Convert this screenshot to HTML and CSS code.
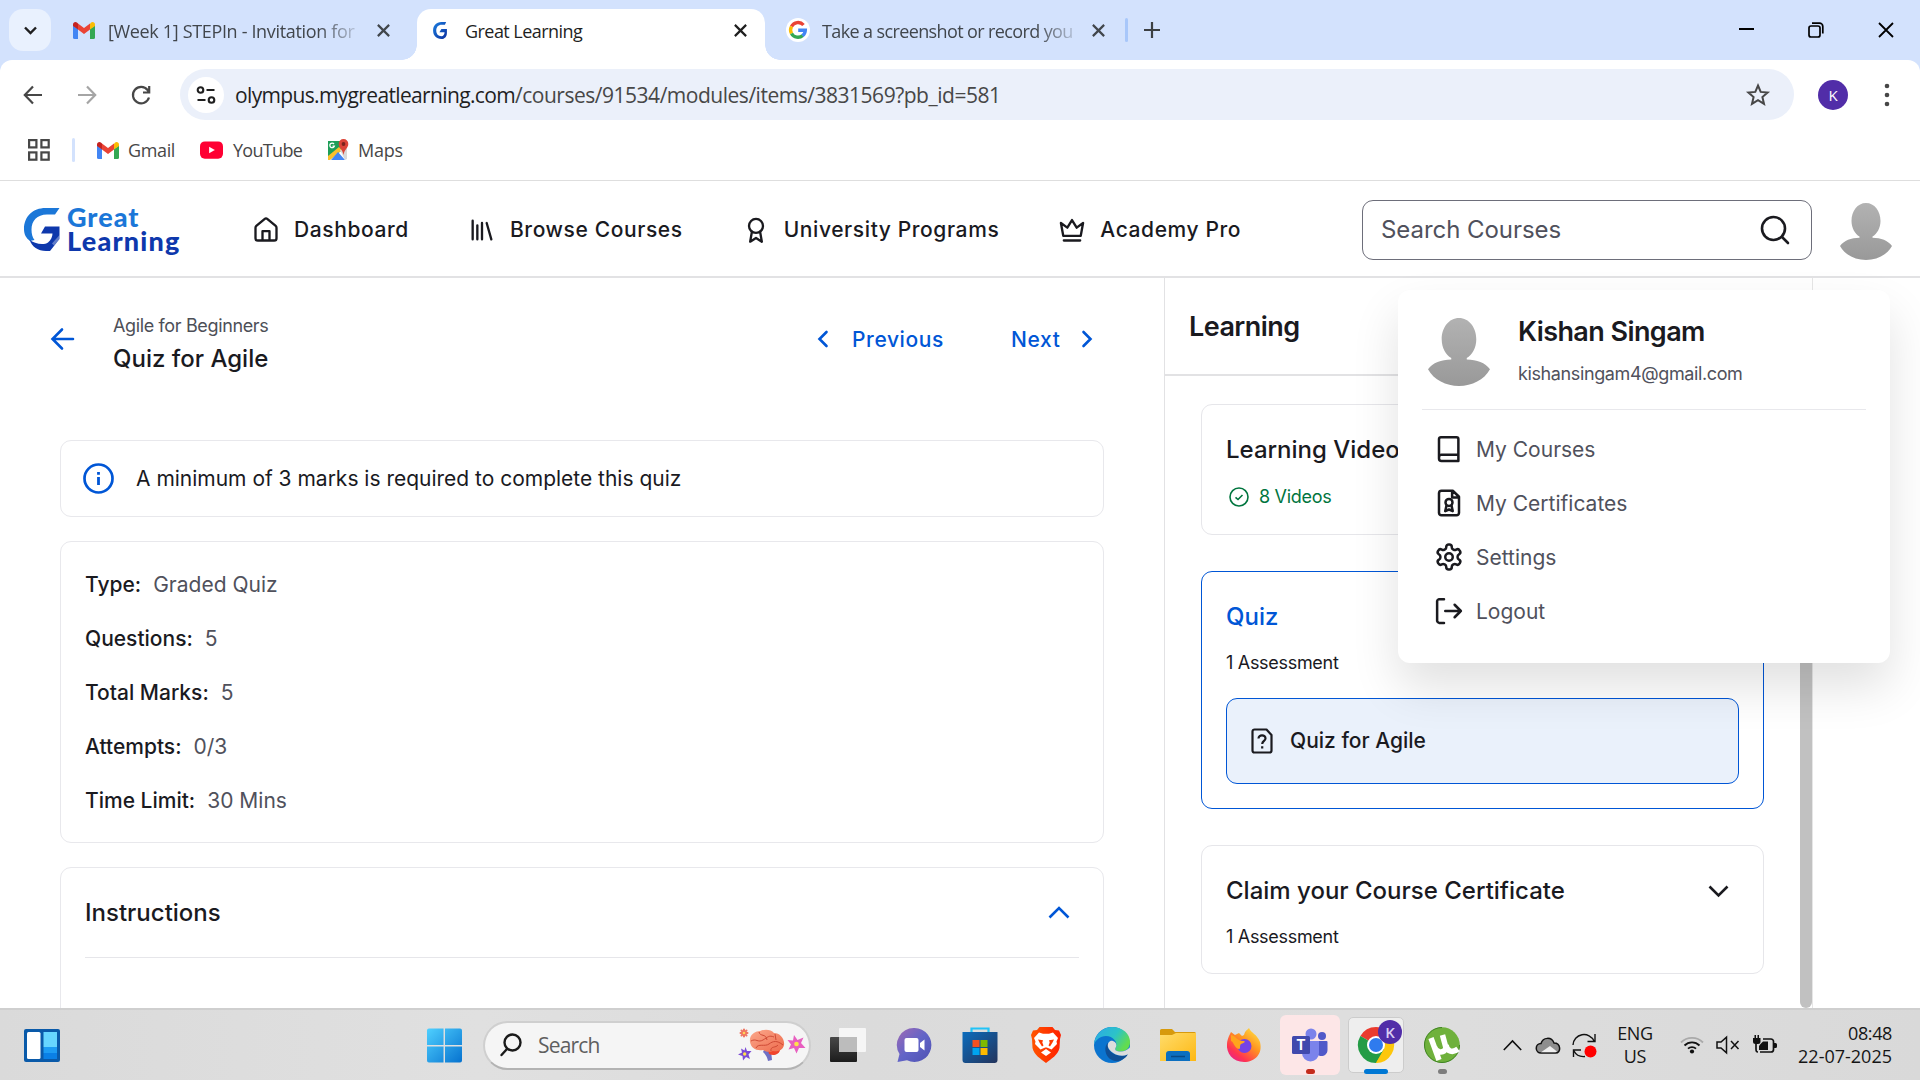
FILE: index.html
```html
<!DOCTYPE html>
<html lang="en">
<head>
<meta charset="utf-8">
<title>Great Learning</title>
<link rel="stylesheet" href="styles.css">
</head>
<body>
<svg class="defs" aria-hidden="true">
  <defs>
    <linearGradient id="gray" x1="0" y1="0" x2="0" y2="1"><stop offset="0" stop-color="#b2b2b2"/><stop offset="1" stop-color="#999"/></linearGradient>
    <linearGradient id="glBlue" x1="0" y1="0" x2="1" y2="1"><stop offset="0" stop-color="#1b7fe0"/><stop offset="1" stop-color="#0b2f9f"/></linearGradient>
    <linearGradient id="win" x1="0" y1="0" x2="1" y2="1"><stop offset="0" stop-color="#4fd0ff"/><stop offset="1" stop-color="#0672cf"/></linearGradient>
    <linearGradient id="chat" x1="0" y1="0" x2="1" y2="1"><stop offset="0" stop-color="#a06ab4"/><stop offset=".5" stop-color="#6264c7"/><stop offset="1" stop-color="#4f52b2"/></linearGradient>
    <linearGradient id="store" x1="0" y1="0" x2="1" y2="1"><stop offset="0" stop-color="#0b6cbd"/><stop offset="1" stop-color="#24345c"/></linearGradient>
    <linearGradient id="brave" x1="0" y1="0" x2="1" y2="0"><stop offset="0" stop-color="#ff5500"/><stop offset="1" stop-color="#ff2000"/></linearGradient>
    <linearGradient id="edgeTop" x1="0" y1="0" x2="1" y2=".5"><stop offset="0" stop-color="#2ba8e8"/><stop offset=".6" stop-color="#2cc3c8"/><stop offset="1" stop-color="#62dc4f"/></linearGradient>
    <linearGradient id="folder" x1="0" y1="0" x2="1" y2="1"><stop offset="0" stop-color="#ffdc6b"/><stop offset="1" stop-color="#fdb813"/></linearGradient>
    <linearGradient id="fox" x1="1" y1="0" x2=".2" y2="1"><stop offset="0" stop-color="#fff14b"/><stop offset=".45" stop-color="#ff9420"/><stop offset=".8" stop-color="#ff3550"/><stop offset="1" stop-color="#e6208e"/></linearGradient>
    <linearGradient id="dark" x1="0" y1="0" x2="0" y2="1"><stop offset="0" stop-color="#484848"/><stop offset="1" stop-color="#1c1c1c"/></linearGradient>
    <linearGradient id="brain" x1="0" y1="0" x2="1" y2="1"><stop offset="0" stop-color="#fba98c"/><stop offset="1" stop-color="#ee6a4c"/></linearGradient>
    <symbol id="gmail" viewBox="0 0 22 17">
      <path fill="#4285f4" d="M0 3.500V15.500A1.500 1.500 0 0 0 1.500 17H5V7z"/>
      <path fill="#34a853" d="M22 3.500V15.500A1.500 1.500 0 0 1 20.500 17H17V7z"/>
      <path fill="#fbbc04" d="M17 2V7.500L22 4V2.500C22 .3 19.500-.8 17.800.8z"/>
      <path fill="#ea4335" d="M5 7.500V1.500L11 6 17 1.500V7.500L11 12z"/>
      <path fill="#c5221f" d="M0 2.500V4L5 7.500V1.500L4.200.8C2.500-.8 0 .3 0 2.500z"/>
    </symbol>
    <symbol id="avatar" viewBox="0 0 52 57">
      <path fill="url(#gray)" d="M26 0C34.500 0 40.500 8 40.500 18 40.500 25 37 31 32.500 33.500V34.800C41 35 48 37.500 52 43 47 52 37 57 26 57S5 52 0 43C4 37.500 11 35 19.500 34.800V33.500C15 31 11.500 25 11.500 18 11.500 8 17.500 0 26 0z"/>
    </symbol>
    <symbol id="cross" viewBox="0 0 12 12"><path fill="none" stroke="currentColor" stroke-width="2" d="M.8.8 11.200 11.200M11.200.8.8 11.200"/></symbol>
  </defs>
</svg>

<header class="tabs">
  <button class="tab-menu"><svg width="13" height="9" viewBox="0 0 13 9"><path fill="none" stroke="#1f1f1f" stroke-width="2.400" d="M1 1.500 6.500 7 12 1.500"/></svg></button>
  <div class="tab tab-mail">
    <svg class="tab-icon" width="22" height="17"><use href="#gmail"/></svg>
    <span class="tab-title fade">[Week 1] STEPIn - Invitation for</span>
    <svg class="tab-close" width="13" height="13"><use href="#cross"/></svg>
  </div>
  <div class="tab tab-active">
    <svg class="tab-icon" width="14" height="17" viewBox="0 0 35 43"><path fill="url(#glBlue)" d="M33 0 30 7H22C13 7 8 13 8 21.500S13 36 21 36C26 36 29 32 29 26H16L21 18H35V27C35 37 29 43 21 43 8 43 0 34 0 21.500S8 0 21 0z"/></svg>
    <span class="tab-title">Great Learning</span>
    <svg class="tab-close" width="13" height="13"><use href="#cross"/></svg>
  </div>
  <div class="tab tab-google">
    <svg class="tab-icon" width="24" height="24" viewBox="0 0 24 24"><circle cx="12" cy="12" r="12" fill="#fff"/><g fill="none" stroke-width="3.400"><path stroke="#ea4335" d="M17.500 7A7.300 7.300 0 0 0 5.500 8.500"/><path stroke="#fbbc04" d="M5.500 8.500A7.300 7.300 0 0 0 5.500 15.500"/><path stroke="#34a853" d="M5.500 15.500A7.300 7.300 0 0 0 16.800 17.400"/><path stroke="#4285f4" d="M16.500 17.700A7.300 7.300 0 0 0 19.300 12.200H12.200"/></g></svg>
    <span class="tab-title fade">Take a screenshot or record you</span>
    <svg class="tab-close" width="13" height="13"><use href="#cross"/></svg>
  </div>
  <i class="tab-sep"></i>
  <svg class="tab-new" width="16" height="16" viewBox="0 0 16 16"><path stroke="#3c4043" stroke-width="2.200" d="M8 0V16M0 8H16"/></svg>
  <div class="window-buttons">
    <svg width="15" height="16" viewBox="0 0 15 16"><path stroke="#000" stroke-width="2" d="M0 7H15"/></svg>
    <svg width="16" height="16" viewBox="0 0 16 16"><g fill="none" stroke="#000" stroke-width="1.700"><rect x="1" y="4" width="11" height="11" rx="2"/><path d="M4 1.200H11.500A3.300 3.300 0 0 1 14.800 4.500V11.500"/></g></svg>
    <svg width="16" height="16" viewBox="0 0 16 16"><path stroke="#000" stroke-width="1.800" d="M1 1 15 15M15 1 1 15"/></svg>
  </div>
</header>

<div class="browser">
  <div class="toolbar">
    <svg class="tool-back" width="20" height="20" viewBox="0 0 20 20"><path fill="none" stroke="#474747" stroke-width="2.200" d="M19 10H2M10 1.500 1.800 10 10 18.500"/></svg>
    <svg class="tool-forward" width="20" height="20" viewBox="0 0 20 20"><path fill="none" stroke="#a5a5a5" stroke-width="2.200" d="M1 10H18M10 1.500 18.200 10 10 18.500"/></svg>
    <svg class="tool-reload" width="20" height="20" viewBox="0 0 20 20"><path fill="none" stroke="#474747" stroke-width="2.200" d="M18 12.500A8.200 8.200 0 1 1 16.600 5L18 7M18.200 1V7.500H12"/></svg>
    <div class="address">
      <span class="site-info"><svg width="20" height="20" viewBox="0 0 20 20"><g fill="none" stroke="#1f1f1f" stroke-width="2.100"><circle cx="4.500" cy="5" r="2.800"/><path d="M10.500 5H18.500M1.500 15H9.500"/><circle cx="15.500" cy="15" r="2.800"/></g></svg></span>
      <span class="url"><b>olympus.mygreatlearning.com</b><span>/courses/91534/modules/items/3831569?pb_id=581</span></span>
      <svg width="24" height="23" viewBox="0 0 24 23"><path fill="none" stroke="#474747" stroke-width="2" d="M12 2.500 14.700 8.900 21.600 9.500 16.400 14 18 20.800 12 17.200 6 20.800 7.600 14 2.400 9.500 9.300 8.900z"/></svg>
    </div>
    <span class="profile">K</span>
    <svg class="tool-menu" width="6" height="22" viewBox="0 0 6 22"><g fill="#474747"><circle cx="3" cy="2" r="2.300"/><circle cx="3" cy="11" r="2.300"/><circle cx="3" cy="20" r="2.300"/></g></svg>
  </div>
  <div class="bookmarks">
    <svg width="22" height="22" viewBox="0 0 22 22"><g fill="none" stroke="#474747" stroke-width="2.200"><rect x="1.100" y="1.100" width="7.300" height="7.300"/><rect x="13.400" y="1.100" width="7.300" height="7.300"/><rect x="1.100" y="13.400" width="7.300" height="7.300"/><rect x="13.400" y="13.400" width="7.300" height="7.300"/></g></svg>
    <i class="bookmark-sep"></i>
    <span class="bookmark bm-gmail"><svg width="22" height="17"><use href="#gmail"/></svg><span>Gmail</span></span>
    <span class="bookmark bm-youtube"><svg width="23" height="18" viewBox="0 0 24 18"><rect width="24" height="18" rx="5" fill="#ff0033"/><path fill="#fff" d="M9.500 5.500 15.500 9 9.500 12.500z"/></svg><span>YouTube</span></span>
    <span class="bookmark bm-maps"><svg width="22" height="22" viewBox="0 0 22 22"><path fill="#1e9e58" d="M1 2H14V12L2 21H1z"/><path fill="#fbc02d" d="M1 17 12 8 15 11 3 21H1z"/><path fill="#4285f4" d="M4 21 11 13 18 21z"/><path fill="#d8d8d8" d="M13 11 20 8V20L18 21z"/><path fill="#db4437" d="M16.500 0A4.800 4.800 0 0 1 21.300 5C21.300 9 17.500 10 16.500 16 15.500 10 11.700 9 11.700 5A4.800 4.800 0 0 1 16.500 0z"/><circle cx="16.500" cy="5" r="1.900" fill="#7b231c"/><path fill="none" stroke="#fff" stroke-width="1.300" d="M7 5A2.300 2.300 0 1 0 7.300 7.200H5.500"/></svg><span>Maps</span></span>
  </div>
</div>

<nav class="site">
  <a class="logo">
    <svg width="36" height="43" viewBox="0 0 36 43"><path fill="#1b77d8" d="M35.500 0 31 6.500H23C13 6.500 7.500 13 7.500 21.500 7.500 26 8.500 29.500 10.500 32L6 33C2 30 0 26.500 0 21 0 8.500 9 0 21.500 0z"/><path fill="#0e38ac" d="M21 18.500H35.500V31L26 43H22C14 43 8 39 5.500 31.500 10 36 20 37.500 24 34.500 27 32 28.500 28.500 28.500 25.500H17z"/><path fill="#fff" d="M28 35.500 30 37.500 35.500 31V27z" opacity=".35"/></svg>
    <span class="logo-text"><span class="logo-great">Great</span><span class="logo-learning">Learning</span></span>
  </a>
  <a class="nav-item"><svg width="28" height="28" viewBox="0 0 24 24"><path d="M3 10a2 2 0 0 1 .7-1.500L10.700 2.600a2 2 0 0 1 2.600 0l7 5.900A2 2 0 0 1 21 10v9a2 2 0 0 1-2 2H5a2 2 0 0 1-2-2zM9 21V13H15V21"/></svg><span>Dashboard</span></a>
  <a class="nav-item"><svg width="28" height="28" viewBox="0 0 24 24"><path d="M16 6 20 20M12 6V20M8 8V20M4 4V20"/></svg><span>Browse Courses</span></a>
  <a class="nav-item"><svg width="28" height="28" viewBox="0 0 24 24"><circle cx="12" cy="8.500" r="6"/><path d="M8.500 13.500 7 22 12 18.800 17 22 15.500 13.500"/></svg><span>University Programs</span></a>
  <a class="nav-item"><svg width="28" height="28" viewBox="0 0 24 24"><path d="M12 3.500 16 10 21.500 6 19.500 17H4.500L2.500 6 8 10zM5 21H19"/></svg><span>Academy Pro</span></a>
  <div class="search"><span>Search Courses</span><svg width="30" height="30" viewBox="0 0 30 30"><g fill="none" stroke="#1a1a1f" stroke-width="2.600" stroke-linecap="round"><circle cx="13.500" cy="13.500" r="11.500"/><path d="M22 22 28 28"/></g></svg></div>
  <svg class="nav-avatar" width="52" height="57"><use href="#avatar"/></svg>
</nav>

<main class="page">
  <section class="content">
    <div class="heading">
      <svg class="back" width="24" height="22" viewBox="0 0 24 22"><path d="M22 11H2M11 1.500 1.500 11 11 20.500"/></svg>
      <div class="titles"><p class="course">Agile for Beginners</p><h1>Quiz for Agile</h1></div>
      <a class="pager prev"><svg width="10" height="16" viewBox="0 0 10 16"><path d="M8.500 1 1.500 8 8.500 15"/></svg><span>Previous</span></a>
      <a class="pager next"><span>Next</span><svg width="10" height="16" viewBox="0 0 10 16"><path d="M1.500 1 8.500 8 1.500 15"/></svg></a>
    </div>
    <div class="card notice"><svg width="31" height="31" viewBox="0 0 31 31"><circle cx="15.500" cy="15.500" r="14" fill="none" stroke="#0056d6" stroke-width="2.700"/><path stroke="#0056d6" stroke-width="2.800" d="M15.500 14V22M15.500 9V11.800"/></svg><span>A minimum of 3 marks is required to complete this quiz</span></div>
    <dl class="card facts">
      <div><dt>Type:</dt><dd>Graded Quiz</dd></div>
      <div><dt>Questions:</dt><dd>5</dd></div>
      <div><dt>Total Marks:</dt><dd>5</dd></div>
      <div><dt>Attempts:</dt><dd>0/3</dd></div>
      <div><dt>Time Limit:</dt><dd>30 Mins</dd></div>
    </dl>
    <div class="card instructions"><h2><span>Instructions</span><svg width="22" height="13" viewBox="0 0 22 13"><path fill="none" stroke="#0056d6" stroke-width="2.600" d="M1.500 11.500 11 2 20.500 11.500"/></svg></h2></div>
  </section>
  <aside class="sidebar">
    <h2 class="side-title">Learning</h2>
    <div class="modules">
      <div class="module videos"><h3>Learning Videos</h3><p class="done"><svg width="20" height="20" viewBox="0 0 20 20"><g fill="none" stroke="#00753e" stroke-width="1.600"><circle cx="10" cy="10" r="9"/><path d="M6.500 10.300 9 12.500 13.500 8"/></g></svg><span>8 Videos</span></p></div>
      <div class="module quiz"><h3>Quiz</h3><p>1 Assessment</p>
        <div class="lesson"><svg width="22" height="26" viewBox="0 0 22 26"><path fill="none" stroke="#1a1a1f" stroke-width="2.200" stroke-linejoin="round" d="M3.500 1.500H15.500L20.500 7V22.500A2 2 0 0 1 18.500 24.500H3.500A2 2 0 0 1 1.500 22.500V3.500A2 2 0 0 1 3.500 1.500z"/><path fill="none" stroke="#1a1a1f" stroke-width="2.200" d="M7.500 10.500C7.500 6 14.700 6.500 14.500 10.500 14.400 13 11.300 12.800 11.200 16M11.200 18.300V20.500"/></svg><span>Quiz for Agile</span></div>
      </div>
      <div class="module claim"><div class="claim-head"><h3>Claim your Course Certificate</h3><svg width="21" height="13" viewBox="0 0 21 13"><path fill="none" stroke="#1a1a1f" stroke-width="2.600" d="M1.500 1.500 10.500 10.500 19.500 1.500"/></svg></div><p>1 Assessment</p></div>
    </div>
    <i class="scroll-thumb"></i>
  </aside>
</main>

<div class="account">
  <div class="account-head"><svg width="62" height="68"><use href="#avatar"/></svg><div><strong>Kishan Singam</strong><small>kishansingam4@gmail.com</small></div></div>
  <a><svg width="30" height="30" viewBox="0 0 24 24"><path d="M5.500 2.500H18A1.500 1.500 0 0 1 19.500 4V21.500H6A2 2 0 0 1 4 19.500V4A1.500 1.500 0 0 1 5.500 2.500zM4 19A2.300 2.300 0 0 1 6 16.500H19.500"/></svg><span>My Courses</span></a>
  <a><svg width="30" height="30" viewBox="0 0 24 24"><path d="M6 2.200H15L20 7V20A2 2 0 0 1 18 21.800H6A2 2 0 0 1 4 20V4A2 2 0 0 1 6 2.200zM14.500 2.500V7.500H19.500M10 14 9 18.500 12 17.200 15 18.500 14 14"/><circle cx="12" cy="11.500" r="2.800"/></svg><span>My Certificates</span></a>
  <a><svg width="30" height="30" viewBox="0 0 24 24"><path d="M12.220 2h-.440a2 2 0 0 0-2 2v.180a2 2 0 0 1-1 1.730l-.430.250a2 2 0 0 1-2 0l-.150-.080a2 2 0 0 0-2.730.730l-.220.380a2 2 0 0 0 .730 2.730l.150.100a2 2 0 0 1 1 1.720v.510a2 2 0 0 1-1 1.740l-.150.090a2 2 0 0 0-.730 2.730l.220.380a2 2 0 0 0 2.730.730l.150-.080a2 2 0 0 1 2 0l.430.250a2 2 0 0 1 1 1.730V20a2 2 0 0 0 2 2h.440a2 2 0 0 0 2-2v-.180a2 2 0 0 1 1-1.730l.430-.250a2 2 0 0 1 2 0l.150.080a2 2 0 0 0 2.730-.730l.220-.390a2 2 0 0 0-.730-2.730l-.150-.080a2 2 0 0 1-1-1.740v-.500a2 2 0 0 1 1-1.740l.150-.090a2 2 0 0 0 .730-2.730l-.220-.380a2 2 0 0 0-2.730-.730l-.150.080a2 2 0 0 1-2 0l-.430-.250a2 2 0 0 1-1-1.730V4a2 2 0 0 0-2-2z"/><circle cx="12" cy="12" r="3"/></svg><span>Settings</span></a>
  <a><svg width="30" height="30" viewBox="0 0 24 24"><path d="M8 2.500H4A2 2 0 0 0 2.500 4V20A2 2 0 0 0 4 21.500H8M9 12H21.500M16.500 7 21.500 12 16.500 17"/></svg><span>Logout</span></a>
</div>

<footer class="taskbar">
  <svg class="widgets" width="36" height="33" viewBox="0 0 36 33"><rect width="36" height="33" rx="2" fill="#0a5aa9"/><rect x="3" y="3" width="13.500" height="27" rx="1.500" fill="#fff"/><path fill="#67d6ff" d="M19.500 3H33V18H19.500z"/><path fill="#1d9cf3" d="M19.500 18H33V24H19.500z"/><path fill="#0a80e6" d="M19.500 24H33V30H19.500z"/></svg>
  <svg class="start" width="35" height="35" viewBox="0 0 36 35"><path fill="url(#win)" d="M2 0H17V17H0V2A2 2 0 0 1 2 0zM18.500 0H34A2 2 0 0 1 36 2V17H18.500zM0 18.500H17V35H2A2 2 0 0 1 0 33zM18.500 18.500H36V33A2 2 0 0 1 34 35H18.500z"/></svg>
  <div class="task-search">
    <svg width="22" height="24" viewBox="0 0 22 24"><g fill="none" stroke="#1a1a1a" stroke-width="2.400" stroke-linecap="round"><circle cx="12.500" cy="9.500" r="8"/><path d="M7 16 1.500 22"/></g></svg>
    <span>Search</span>
    <svg class="brain" width="68" height="34" viewBox="0 0 68 34">
      <path fill="#6f6fc4" d="M26 22H33L34 32 30 33C29 28 27 26 25 24z"/><path fill="#f0442c" d="M30 22H42C41 27 35 28 31 26z"/>
      <path fill="url(#brain)" d="M12 14C11 6 18 3 22 3 26 1 33 1 36 5 42 5 47 11 46 17 45 23 38 24 35 23 30 25 27 23 25 22 18 23 13 20 12 14z"/>
      <path fill="none" stroke="#cf4a35" stroke-width="1" d="M13 13C18 10 20 15 25 12S31 7 36 9M21 4C22 9 28 5 29 12M18 20C20 15 27 19 31 16S39 12 45 17M33 23C32 18 38 20 40 17M37 6 38 12"/>
      <g stroke-linecap="round"><path stroke="#ef7561" stroke-width="2" d="M6 1.500V8.500M2.500 5H9.500M3.500 2.500 8.500 7.500M8.500 2.500 3.500 7.500"/></g>
      <path fill="#7b4ad6" d="M7.500 19 9 23 13.500 23 10.500 26.500 12 31 8 29 5 32.500 4.500 28 0 26.500 4 24.500 3 20.500 6.500 22.500z"/>
      <path fill="#e85fc0" d="M56 7 59.500 12 65.500 9.500 63 15 67.500 20 61 20 58.500 25.500 56 20 50.500 21.500 53 16.500 49.500 12 55 12.500z"/>
      <circle cx="6" cy="5" r="1.300" fill="#ffd45a"/><circle cx="6.700" cy="26" r="1.700" fill="#ffe14a"/><circle cx="58.500" cy="16" r="2.300" fill="#ffe14a"/>
    </svg>
  </div>
  <div class="apps">
    <span class="app"><svg width="36" height="36" viewBox="0 0 36 36"><rect y="10" width="27" height="25" rx="1" fill="url(#dark)"/><rect x="9" y="1" width="27" height="24" rx="1" fill="#fff" opacity=".75"/><path fill="#bcbcbc" d="M9 10H27V25H9z"/></svg></span>
    <span class="app"><svg width="35" height="36" viewBox="0 0 35 36"><path fill="url(#chat)" d="M17.500 1A17 17 0 1 1 10 33.300L.5 35 2.500 27A17 17 0 0 1 17.500 1z"/><rect x="7.500" y="11" width="14" height="14" rx="2" fill="#fff"/><path fill="#fff" d="M23 16 27.500 12.500V23.500L23 20z"/></svg></span>
    <span class="app"><svg width="36" height="36" viewBox="0 0 36 36"><path fill="none" stroke="#21c3f7" stroke-width="2.200" d="M9.500 6V1.500H26.500V6"/><path fill="url(#store)" d="M.5 5H35.500V33A3 3 0 0 1 32.500 36H3.500A3 3 0 0 1 .5 33z"/><path fill="#f25022" d="M10.500 13H17.500V20H10.500z"/><path fill="#7fba00" d="M18.500 13H25.500V20H18.500z"/><path fill="#00a4ef" d="M10.500 21H17.500V28H10.500z"/><path fill="#ffb900" d="M18.500 21H25.500V28H18.500z"/></svg></span>
    <span class="app"><svg width="32" height="36" viewBox="0 0 32 36"><path fill="url(#brave)" d="M9.500 0H22.500L25 3 29 3.500 31 8 30 12 29.500 21C28 28 21 32 16 36 11 32 4 28 2.500 21L2 12 1 8 3 3.500 7 3z"/><path fill="#fff" d="M9 5.500 13 6.800H19L23 5.500 28 11 26.500 14.500 27 17 21.500 22.500 16.800 20.500H15.200L10.500 22.500 5 17 5.500 14.500 4 11zM16 22 21 25.500 16 29 11 25.500z"/><path fill="#ff3a00" d="M8 12.500 13 13.300 12.300 15.500 13.500 18.500 12 19.500 9.500 15.500zM24 12.500 19 13.300 19.700 15.500 18.500 18.500 20 19.500 22.500 15.500z"/></svg></span>
    <span class="app"><svg width="36" height="36" viewBox="0 0 36 36"><circle cx="18" cy="18" r="18" fill="#0b74cf"/><path fill="url(#edgeTop)" d="M0 17C1 7 9 0 18 0 29 0 36 7 36 15 36 21 32 24.500 27 24.500 22 24.500 20 23 22 20 24 15 19 9 12 9 6 9 2 13 0 17z"/><path fill="#0f4f96" d="M14 16C9 20 11 32 21 34 27 35 33 30 34 27 25 31 17 27 14 21z"/><path fill="#ddd" d="M22 20C20 23 22 24.500 27 24.500 30 24.500 33 23 35.800 20.500L36.500 27 33.500 27.500C26 31 16 26 14 20 13 16 16 13 19 14 22 15 23 17.500 22 20z"/></svg></span>
    <span class="app"><svg width="36" height="34" viewBox="0 0 36 34"><path fill="#d79a0d" d="M0 2.500A1.500 1.500 0 0 1 1.500 1H12L15 4H34.500A1.500 1.500 0 0 1 36 5.500V10H0z"/><path fill="url(#folder)" d="M0 7H12L16 5H36V33H0z"/><path fill="#0c6fc0" d="M6 33V26A3 3 0 0 1 9 23H27A3 3 0 0 1 30 26V33z"/><path stroke="#084a86" stroke-width="1.500" d="M11 28.500H25"/></svg></span>
    <span class="app"><svg width="34" height="36" viewBox="0 0 34 36"><path fill="url(#fox)" d="M2 9 4 5 8 8 12 6 15 9 17 8C18 4 20 3 22 1 24 6 30 7 33 15 36 27 28 35 17 35 6 35-1 26 0 17 0 14 1 12 2 9z"/><circle cx="17.500" cy="19" r="7" fill="#7542e5"/><path fill="#ffa41c" d="M4 8C9 9 10 14 16 14 19 14 18 16 14 17 12 19 14 22 12 22 7 21 7 15 4 14z"/></svg></span>
    <span class="app app-teams"><svg width="36" height="34" viewBox="0 0 36 34"><circle cx="30" cy="8" r="4" fill="#5059c9"/><circle cx="19" cy="6" r="5.500" fill="#7b83eb"/><path fill="#5059c9" d="M24 13H34.500A1 1 0 0 1 35.500 14V22C35.500 28 28 30 25 26z"/><path fill="#7b83eb" d="M10 13H27V25A8 8 0 0 1 10 25z"/><rect y="8" width="18" height="18" rx="1.500" fill="#4049ad"/><text x="9" y="22" text-anchor="middle" class="teams-t">T</text></svg><i></i></span>
    <span class="app app-chrome"><svg width="36" height="36" viewBox="0 0 36 36"><path fill="#ea3b2e" d="M18 18 2.400 9A18 18 0 0 1 33.600 9z"/><path fill="#fdc70c" d="M18 18 33.600 9A18 18 0 0 1 18 36z"/><path fill="#249c46" d="M18 18V36A18 18 0 0 1 2.400 9z"/><path fill="#249c46" d="M9 20 18 36 26 22z"/><path fill="#fdc70c" d="M26 22.500 18 36 29 32 34 20z"/><circle cx="18" cy="18" r="9" fill="#fff"/><circle cx="18" cy="18" r="7" fill="#2f7bee"/></svg><b>K</b><i></i></span>
    <span class="app app-torrent"><svg width="36" height="36" viewBox="0 0 36 36"><circle cx="18" cy="18" r="17.800" fill="#6fb13c"/><path fill="none" stroke="#3f8424" d="M18 .5A17.500 17.500 0 1 0 35.500 18"/><path fill="none" stroke="#fff" stroke-width="5.500" d="M7 11 15 33M10.500 20C12 26 20 27 22 21L18.500 8M22 18C23 25 29 26 34 22"/></svg><i></i></span>
  </div>
  <div class="tray">
    <svg class="tray-up" width="19" height="11" viewBox="0 0 19 11"><path fill="none" stroke="#111" stroke-width="1.600" d="M.8 10 9.500 1 18.200 10"/></svg>
    <svg class="tray-cloud" width="25" height="17" viewBox="0 0 25 17"><path fill="#8e8e8e" stroke="#111" stroke-width="1.500" d="M5 16A4.500 4.500 0 0 1 5 6.500C7 0 15.500-.5 18 6 25 6 25.500 16 19.500 16z"/><path fill="#efefef" d="M5 15.200 14 9 21 14.500 19.500 15.200z"/></svg>
    <svg class="tray-sync" width="25" height="25" viewBox="0 0 25 25"><g fill="none" stroke="#111" stroke-width="1.400"><path d="M1 12A11 11 0 0 1 22 8M23 1V8.500H15.500M1.500 24V17H9M2 18C4 22 8 24 13 23.500"/></g><circle cx="18.500" cy="18.500" r="6" fill="#f00"/></svg>
    <span class="lang"><span>ENG</span><span>US</span></span>
    <svg class="tray-wifi" width="24" height="18" viewBox="0 0 24 18"><g fill="none" stroke="#111" stroke-width="1.800"><path stroke="#aaa" d="M1 6.500A15.500 15.500 0 0 1 23 6.500"/><path d="M4.500 9.500A10.500 10.500 0 0 1 19.500 9.500M8 12.700A5.800 5.800 0 0 1 16 12.700"/></g><circle cx="12" cy="15.500" r="2.100" fill="#111"/></svg>
    <svg class="tray-sound" width="24" height="18" viewBox="0 0 24 18"><path fill="none" stroke="#111" stroke-width="1.500" d="M1 6H5L10.500 1.200V16.800L5 12H1zM15 5 22.500 13M22.500 5 15 13"/></svg>
    <svg class="tray-battery" width="26" height="20" viewBox="0 0 26 20"><path fill="none" stroke="#111" stroke-width="1.700" d="M11 4H19A2.500 2.500 0 0 1 21.500 6.500V14.500A2.500 2.500 0 0 1 19 17H8M4 9V14C4 17 5 17 6 17"/><path fill="#111" d="M22 8H23.500A1.500 1.500 0 0 1 25 9.500V11.500A1.500 1.500 0 0 1 23.500 13H22zM8.500 9 11 6.500H16V15H7V11zM1 3H2.500V0H4V3H5.500V0H7V3H8.500V6.500A2.500 2.500 0 0 1 6 9H3.500A2.500 2.500 0 0 1 1 6.500z"/></svg>
    <span class="clock"><span>08:48</span><span>22-07-2025</span></span>
  </div>
</footer>
</body>
</html>
```
FILE: styles.css
```css
* { box-sizing: border-box; }
body { margin: 0; width: 1920px; height: 1080px; overflow: hidden; display: flex; flex-direction: column; position: relative; background: #d3e2fd; color: #1a1a1f; font-family: Inter, "Liberation Sans", sans-serif; }
svg { display: block; flex: none; overflow: visible; }
h1, h2, h3, p, dl, dd { margin: 0; font-weight: 500; }
.defs { position: absolute; width: 0; height: 0; }

/* tab strip */
.tabs { height: 60px; flex: none; display: flex; align-items: flex-start; background: #d3e2fd; font: 18px "Open Sans", sans-serif; color: #41464c; }
.tab-menu { width: 42px; height: 42px; margin: 9px 0 0 9px; border: 0; border-radius: 14px; background: #e9f1fe; display: grid; place-items: center; padding: 0; }
.tab { height: 51px; margin-top: 9px; display: flex; align-items: center; padding-bottom: 9px; white-space: nowrap; }
.tab-close { margin-left: auto; }
.tab-title { line-height: 28px; padding-top: 2px; letter-spacing: -.55px; }
.fade { -webkit-mask-image: linear-gradient(90deg, #000 85%, transparent 104%); mask-image: linear-gradient(90deg, #000 85%, transparent 104%); }
.tab-mail { width: 366px; padding-left: 22px; padding-right: 27px; }
.tab-mail .tab-title { width: 247px; margin-left: 13px; letter-spacing: -.34px; }
.tab-active { width: 348px; background: #fff; border-radius: 14px 14px 0 0; padding-left: 16px; padding-right: 18px; color: #1f1f1f; position: relative; }
.tab-active::before, .tab-active::after { content: ""; position: absolute; bottom: 0; width: 15px; height: 15px; }
.tab-active::before { left: -15px; background: radial-gradient(circle at 0 0, transparent 14.500px, #fff 15px); }
.tab-active::after { right: -15px; background: radial-gradient(circle at 100% 0, transparent 14.500px, #fff 15px); }
.tab-active .tab-title { margin-left: 18px; }
.tab-google { width: 340px; padding-left: 21px; }
.tab-google .tab-title { width: 252px; margin-left: 12px; letter-spacing: -.62px; }
.tab-sep { width: 3px; height: 24px; margin: 18px 0 0 20px; background: #a8c7fa; border-radius: 2px; }
.tab-new { margin: 22px 0 0 16px; }
.window-buttons { display: flex; gap: 54px; margin: 22px 26px 0 auto; }

/* toolbar and bookmarks */
.browser { height: 121px; flex: none; background: #fff; border-radius: 12px 12px 0 0; border-bottom: 1px solid #dedede; font-family: "Open Sans", sans-serif; }
.toolbar { height: 69px; display: flex; align-items: center; padding-left: 23px; }
.tool-forward { margin-left: 34px; }
.tool-reload { margin-left: 34px; }
.address { width: 1614px; height: 51px; margin-left: 29px; border-radius: 26px; background: #ebf0fa; display: flex; align-items: center; padding: 0 24px 0 8px; }
.site-info { width: 36px; height: 36px; border-radius: 50%; background: #fff; display: grid; place-items: center; }
.url { margin-left: 11px; flex: 1; font-size: 21px; color: #474747; display: flex; line-height: 30px; letter-spacing: -.48px; }
.url b { font-weight: 400; color: #1f1f1f; letter-spacing: -.65px; }
.profile { width: 30px; height: 30px; margin-left: 24px; border-radius: 50%; background: #512da8; color: #fff; font-size: 15px; line-height: 30px; text-align: center; }
.tool-menu { margin-left: 36px; }
.bookmarks { height: 42px; display: flex; align-items: center; padding-left: 28px; font-size: 18px; line-height: 24px; color: #474747; }
.bookmark-sep { width: 3px; height: 24px; margin-left: 22px; border-radius: 2px; background: #d3e2fd; }
.bookmark { display: flex; align-items: center; gap: 9px; }
.bookmark span { margin-top: -1px; }
.bm-gmail { margin-left: 22px; letter-spacing: -.37px; }
.bm-youtube { margin-left: 25px; letter-spacing: -.7px; gap: 10px; }
.bm-maps { margin-left: 25px; letter-spacing: -.3px; }

/* site navigation */
.site { height: 97px; flex: none; display: flex; align-items: center; padding: 2px 0 0 24px; border-bottom: 2px solid #e2e2e4; background: #fff; font-weight: 500; font-size: 21px; }
.logo { width: 228px; display: flex; font-family: Lato, sans-serif; font-weight: 900; font-size: 27px; }
.logo svg { margin-top: 1px; }
.logo-text { display: flex; flex-direction: column; align-items: flex-start; margin: -2px 0 0 7px; }
.logo-text span { line-height: 23.500px; white-space: nowrap; }
.logo-great { color: #1b77d8; letter-spacing: 1px; }
.logo-learning { color: #0e38ac; letter-spacing: 1.200px; }
.nav-item { display: flex; align-items: center; gap: 14px; margin-right: 59px; white-space: nowrap; letter-spacing: .6px; }
.nav-item path, .nav-item circle { fill: none; stroke: #1a1a1f; stroke-width: 2; stroke-linecap: round; stroke-linejoin: round; }
.search { width: 450px; height: 60px; border: 1px solid #6d6e7a; border-radius: 11px; margin-left: auto; display: flex; align-items: center; justify-content: space-between; padding: 0 21px 0 18px; font-size: 24px; font-weight: 400; color: #50515c; letter-spacing: -.05px; }
.nav-avatar { margin: 4px 28px 0 28px; }

/* page */
.page { height: 730px; flex: none; display: flex; overflow: hidden; background: #fff; }
.content { width: 1164px; padding: 0 60px; }
.heading { height: 162px; display: flex; margin-left: -9px; }
.back { margin-top: 50px; }
.back path, .pager path { fill: none; stroke: #0056d6; stroke-width: 2.600; stroke-linecap: round; }
.titles { margin: 32px 0 0 38px; width: 706px; }
.course { font-size: 18px; line-height: 32px; color: #4d4f57; font-weight: 400; letter-spacing: -.36px; }
h1 { font-size: 24px; line-height: 34px; }
.pager { height: 32px; margin-top: 45px; display: flex; align-items: center; color: #0056d6; font-size: 21px; font-weight: 500; letter-spacing: .6px; }
.prev { gap: 24px; white-space: nowrap; flex: none; width: 126px; margin-left: -1px; }
.next { gap: 22px; margin-left: 67px; }
.card { width: 1044px; border: 1px solid #e8e8ec; border-radius: 11px; }
.notice { height: 77px; margin-bottom: 24px; display: flex; align-items: center; gap: 22px; padding-left: 22px; font-size: 21px; letter-spacing: -.01px; }
.facts { height: 302px; margin-bottom: 24px; padding: 15px 24px; font-size: 21px; }
.facts div { height: 54px; display: flex; align-items: center; gap: 12px; }
.facts dt { font-weight: 500; }
.facts dd { font-weight: 400; color: #50515c; }
.instructions { height: 200px; padding: 0 24px; }
.instructions h2 { height: 90px; font-size: 24px; display: flex; align-items: center; justify-content: space-between; padding-right: 9px; border-bottom: 1px solid #e6e6ea; }
.sidebar { width: 649px; border-left: 1px solid #e2e2e4; border-right: 1px solid #e6e6e6; position: relative; }
.side-title { height: 98px; border-bottom: 2px solid #e2e2e4; padding-left: 24px; font-size: 27px; line-height: 98px; font-weight: 600; letter-spacing: -.55px; }
.modules { padding: 28px 0 0 36px; display: flex; flex-direction: column; gap: 36px; }
.module { width: 563px; border: 1px solid #e6e6ea; border-radius: 11px; padding: 0 24px; }
.module h3 { font-size: 24px; line-height: 32px; white-space: nowrap; }
.module p { font-size: 18px; line-height: 26px; font-weight: 400; letter-spacing: -.3px; }
.videos { height: 131px; padding-top: 29px; }
.videos .done { margin-top: 18px; padding-left: 3px; display: flex; align-items: center; gap: 10px; color: #00753e; }
.quiz { height: 238px; border-color: #0056d6; padding-top: 29px; }
.quiz h3 { color: #0056d6; }
.quiz p { margin-top: 17px; }
.lesson { height: 86px; margin-top: 22px; border: 1px solid #0056d6; border-radius: 11px; background: #eaf1fb; display: flex; align-items: center; gap: 17px; padding-left: 24px; padding-bottom: 1px; font-size: 21px; font-weight: 500; }
.claim { height: 129px; padding-top: 29px; }
.claim-head { display: flex; justify-content: space-between; align-items: center; padding-right: 10px; }
.claim p { margin-top: 17px; }
.scroll-thumb { position: absolute; right: 0; bottom: 0; width: 12px; height: 600px; border-radius: 6px; background: #c1c1c1; }

/* account menu */
.account { position: absolute; left: 1398px; top: 290px; width: 492px; height: 373px; border-radius: 12px; background: #fff; box-shadow: 0 24px 48px rgba(0, 10, 0, .12); padding: 0 24px; }
.account-head { height: 120px; border-bottom: 1px solid #e8e8ec; display: flex; padding: 28px 0 0 6px; gap: 28px; margin-bottom: 12px; }
.account-head div { display: flex; flex-direction: column; align-items: flex-start; margin-top: -4px; }
.account strong { font-size: 27px; font-weight: 600; line-height: 36px; letter-spacing: -.58px; }
.account small { font-size: 18px; line-height: 26px; color: #50515c; margin-top: 11px; letter-spacing: -.38px; }
.account a { height: 54px; display: flex; align-items: center; gap: 12px; padding-left: 12px; font-size: 21px; color: #50515c; }
.account a path, .account a circle { fill: none; stroke: #1a1a1f; stroke-width: 2; stroke-linejoin: round; stroke-linecap: round; }

/* taskbar */
.taskbar { height: 72px; flex: none; background: linear-gradient(90deg, #dadada, #e0e0e0 25%, #dbdbdb 45%, #dedede 70%, #d9d9d9); display: flex; align-items: center; border-top: 2px solid #cfcfcf; font-family: "Open Sans", sans-serif; }
.widgets { margin-left: 24px; }
.start { margin-left: 367px; }
.task-search { width: 328px; height: 49px; margin-left: 21px; border: 2px solid #cfcfcf; border-bottom-color: #b3b3b3; border-radius: 25px; background: #f5f5f5; display: flex; align-items: center; padding-left: 15px; gap: 16px; font-size: 21px; color: #5f5f5f; letter-spacing: -.8px; }
.brain { margin-left: auto; margin-right: 3px; }
.apps { margin-left: 7px; display: flex; gap: 6px; }
.app { width: 60px; height: 60px; display: grid; place-items: center; position: relative; }
.app i { position: absolute; bottom: 1px; left: 26px; width: 9px; height: 5px; border-radius: 3px; background: #7d7d7d; }
.app-teams { background: #fde6e7; border-radius: 6px; }
.app-teams i { background: #c42b1c; }
.teams-t { font: 700 14px Inter, sans-serif; fill: #fff; }
.app-chrome::before { content: ""; position: absolute; inset: 2px; background: #eee; border-radius: 5px; border: 1px solid #ccc; }
.app-chrome svg { position: relative; }
.app-chrome b { position: absolute; left: 32px; top: 5px; width: 24px; height: 24px; border-radius: 50%; background: #512da8; color: #d9cdf2; font: 600 15px/24px "Open Sans", sans-serif; text-align: center; }
.app-chrome i { left: 18px; width: 24px; background: #0078d4; }
.tray { display: flex; align-items: center; margin-left: 31px; font-size: 18px; color: #151515; }
.tray-cloud { margin-left: 14px; }
.tray-sync { margin-left: 11px; }
.lang { width: 40px; margin-left: 18px; display: flex; flex-direction: column; align-items: center; line-height: 23px; letter-spacing: -.3px; }
.tray-wifi { margin-left: 25px; }
.tray-sound { margin-left: 12px; }
.tray-battery { margin-left: 12px; }
.clock { width: 114px; display: flex; flex-direction: column; align-items: flex-end; line-height: 23px; margin-top: -1px; }
.clock span:first-child { letter-spacing: -.38px; }
```
